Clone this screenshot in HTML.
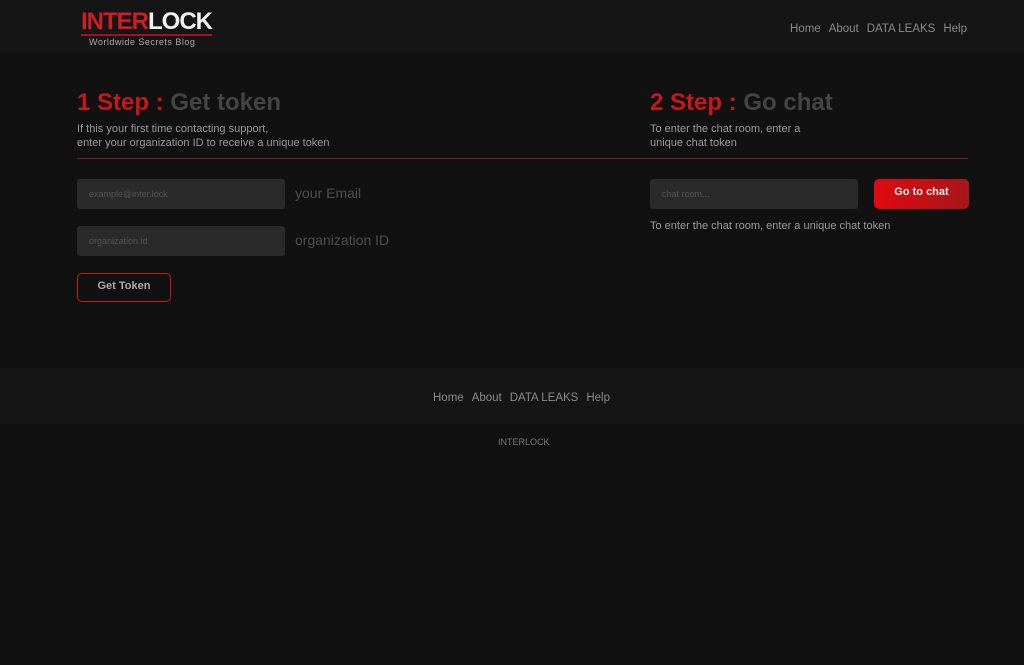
<!DOCTYPE html>
<html><head><style>
*{margin:0;padding:0;box-sizing:border-box}
body{width:1024px;height:665px;background:#111111;font-family:"Liberation Sans",sans-serif;position:relative;overflow:hidden;color:#999}
.hdr{position:absolute;left:0;top:0;width:1024px;height:54px;background:#151515}
.abs{position:absolute;white-space:nowrap}
.nav a{color:#8a8a8a;font-size:11.5px;margin-left:8px;text-decoration:none}
.nav a:first-child{margin-left:0}
h2{font-size:24px;font-weight:bold;color:#444}
h2 span{color:#c8161a}
.p{font-size:11px;color:#9a9a9a;line-height:14px}
.inp{position:absolute;background:#2a2a2a;border-radius:3px;height:30px;font-size:9px;color:#555;padding:10px 12px}
.lbl{font-size:14px;color:#4e4e4e}
</style></head><body>
<div class="hdr"></div>
<div class="abs" style="left:81px;top:8px;font-size:24px;font-weight:bold;letter-spacing:-1px"><span style="color:#d01c22">INTER</span><span style="color:#f0f0f0">LOCK</span></div>
<div class="abs" style="left:81px;top:34px;width:131px;height:2px;background:#a01418"></div>
<div class="abs" style="left:89px;top:37px;font-size:9px;color:#aaa;letter-spacing:.5px">Worldwide Secrets Blog</div>
<div class="abs nav" style="left:790px;top:19px"><a>Home</a><a>About</a><a>DATA LEAKS</a><a>Help</a></div>
<h2 class="abs" style="left:77px;top:89px"><span>1 Step :</span> Get token</h2>
<div class="abs p" style="left:77px;top:122px">If this your first time contacting support,<br>enter your organization ID to receive a unique token</div>
<h2 class="abs" style="left:650px;top:89px"><span>2 Step :</span> Go chat</h2>
<div class="abs p" style="left:650px;top:122px">To enter the chat room, enter a<br>unique chat token</div>
<div class="abs" style="left:77px;top:158px;width:891px;height:1px;background:#8a1518"></div>
<div class="inp" style="left:77px;top:179px;width:208px">example@inter.lock</div>
<div class="abs lbl" style="left:295px;top:185px">your Email</div>
<div class="inp" style="left:77px;top:226px;width:208px">organization id</div>
<div class="abs lbl" style="left:295px;top:232px">organization ID</div>
<div class="abs" style="left:77px;top:273px;width:94px;height:29px;border:1px solid #c8161a;border-radius:5px;color:#aaa;font-size:11px;font-weight:bold;text-align:center;line-height:24px">Get Token</div>
<div class="inp" style="left:650px;top:179px;width:208px">chat room...</div>
<div class="abs" style="left:874px;top:179px;width:95px;height:30px;background:linear-gradient(90deg,#e00a0e,#a5161a);border-radius:5px;color:#eee;font-size:11px;font-weight:bold;text-align:center;line-height:26px">Go to chat</div>
<div class="abs p" style="left:650px;top:219px">To enter the chat room, enter a unique chat token</div>
<div class="abs" style="left:0;top:368px;width:1024px;height:56px;background:#151515"></div>
<div class="abs nav" style="left:433px;top:388px"><a>Home</a><a>About</a><a>DATA LEAKS</a><a>Help</a></div>
<div class="abs" style="left:498px;top:437px;font-size:9px;color:#777">INTERLOCK</div>
</body></html>
